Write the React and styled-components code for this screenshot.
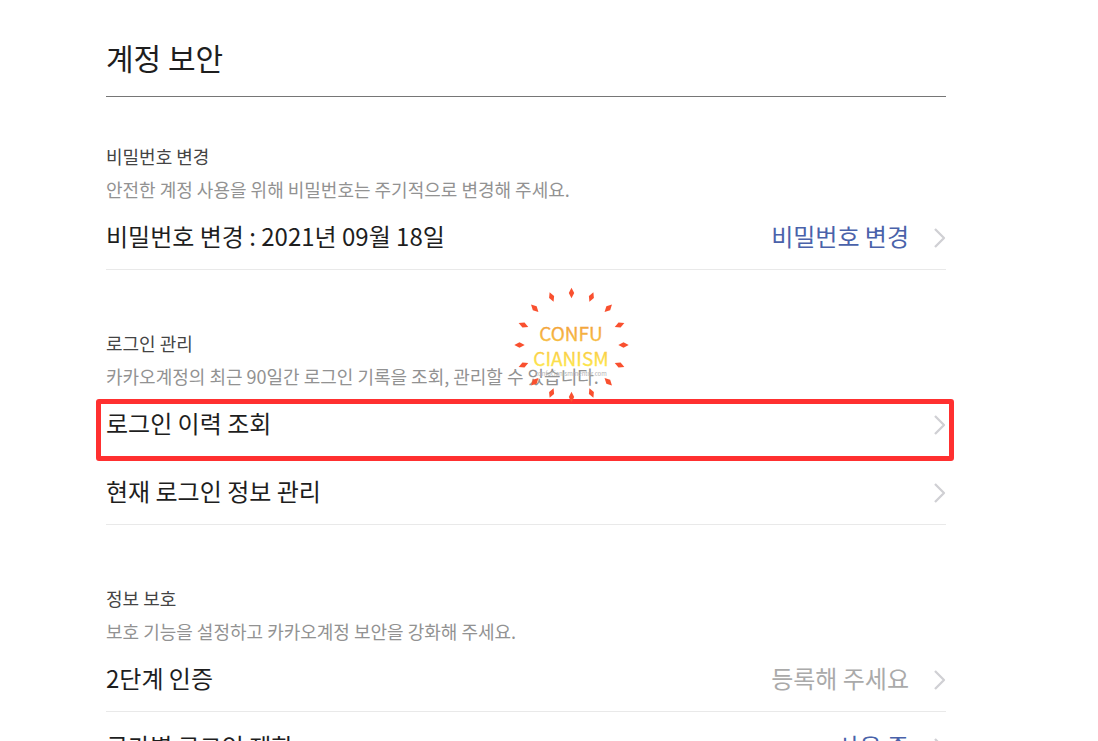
import React from 'react'
import styled, { createGlobalStyle, css } from 'styled-components'

const GlobalStyle = createGlobalStyle`
    body {
        margin: 0;
        background: #fff;
        color: #1e1e1e;
        font-family: 'Noto Sans CJK KR', sans-serif;
    }
`;

const tones = {
    link: '#4a62aa',
    muted: '#aaa'
};

const Page = styled.main`
    max-width: 840px;
    padding: 35px 152px 0 106px;
`;

const Title = styled.h1`
    margin: 0 0 46px;
    padding-bottom: 17px;
    border-bottom: 1px solid #767676;
    font-size: 30px;
    line-height: 44px;
    font-weight: 400;
`;

const Sections = styled.div`
    display: flex;
    flex-direction: column;
    gap: 60px;
`;

const Section = styled.section`
    position: relative;
`;

const Label = styled.h2`
    margin: 0 0 7px;
    color: #444;
    font-size: 18px;
    line-height: 26px;
    font-weight: 400;
`;

const Description = styled.p`
    margin: 0;
    color: #929292;
    font-size: 18px;
    line-height: 26px;
`;

const List = styled.ul`
    margin: 0;
    padding: 0;
    list-style: none;
`;

const Item = styled.li`
    position: relative;
    border-bottom: 1px solid #e9e9e9;

    ${(props) => props.$marked && css`
        &::after {
            content: '';
            position: absolute;
            inset: 10px -8px -5px -10px;
            border: 5px solid #ff3030;
            border-radius: 3px;
            pointer-events: none;
        }
    `}
`;

const ItemLink = styled.a`
    display: flex;
    align-items: center;
    padding: 16px 0 15px;
    color: inherit;
    font-size: 24px;
    line-height: 36px;
    text-decoration: none;
`;

const ItemStatus = styled.span`
    margin-left: auto;
    color: ${(props) => tones[props.$tone]};
`;

const Arrow = styled.svg`
    flex: none;
    margin-left: 23px;
    width: 14px;
    height: 24px;
`;

const Stamp = styled.svg`
    position: absolute;
    top: -43px;
    left: 408px;
    width: 116px;
    height: 116px;
    z-index: 1;
    pointer-events: none;
`;

const sections = [
    {
        label: '비밀번호 변경',
        description: '안전한 계정 사용을 위해 비밀번호는 주기적으로 변경해 주세요.',
        items: [{ name: '비밀번호 변경 : 2021년 09월 18일', status: '비밀번호 변경', tone: 'link' }]
    },
    {
        label: '로그인 관리',
        description: '카카오계정의 최근 90일간 로그인 기록을 조회, 관리할 수 있습니다.',
        stamp: true,
        items: [
            { name: '로그인 이력 조회', marked: true },
            { name: '현재 로그인 정보 관리' }
        ]
    },
    {
        label: '정보 보호',
        description: '보호 기능을 설정하고 카카오계정 보안을 강화해 주세요.',
        items: [
            { name: '2단계 인증', status: '등록해 주세요', tone: 'muted' },
            { name: '국가별 로그인 제한', status: '사용 중', tone: 'link' }
        ]
    }
];

const rays = Array.from({ length: 16 }, (_, i) => i * 22.5);

const ConfucianismStamp = () => (
    <Stamp viewBox="0 0 116 116" aria-hidden="true">
        <defs>
            <linearGradient id="gold" gradientUnits="userSpaceOnUse" x1="0" y1="38" x2="0" y2="80">
                <stop offset="0" stopColor="#f2a23c" />
                <stop offset="1" stopColor="#fde74c" />
            </linearGradient>
        </defs>
        {rays.map((angle) => (
            <path key={angle} d="M57.5 .8l2.7 5.2-2.7 5.2-2.7-5.2z" fill="#f9502f" transform={`rotate(${angle} 57.5 58)`} />
        ))}
        <g fill="url(#gold)" stroke="url(#gold)" strokeWidth=".3" fontSize="19" textAnchor="middle">
            <text x="57" y="54">CONFU</text>
            <text x="57" y="79">CIANISM</text>
        </g>
        <text x="57" y="89" fill="#b4b4b4" fontSize="6" textAnchor="middle">confucianismmentor.com</text>
    </Stamp>
);

const ListItem = ({ name, status, tone, marked }) => (
    <Item $marked={marked}>
        <ItemLink href="#">
            {name}
            <ItemStatus $tone={tone}>{status}</ItemStatus>
            <Arrow viewBox="0 0 14 24" aria-hidden="true">
                <path d="M3 5l9 9-9 9" fill="none" stroke="#d0d0d4" strokeWidth="2.3" strokeLinejoin="round" />
            </Arrow>
        </ItemLink>
    </Item>
);

const App = () => (
    <>
        <GlobalStyle />
        <Page>
            <Title>계정 보안</Title>
            <Sections>
                {sections.map((section) => (
                    <Section key={section.label}>
                        <Label>{section.label}</Label>
                        <Description>{section.description}</Description>
                        <List>
                            {section.items.map((item) => (
                                <ListItem key={item.name} {...item} />
                            ))}
                        </List>
                        {section.stamp && <ConfucianismStamp />}
                    </Section>
                ))}
            </Sections>
        </Page>
    </>
);

export default App;
